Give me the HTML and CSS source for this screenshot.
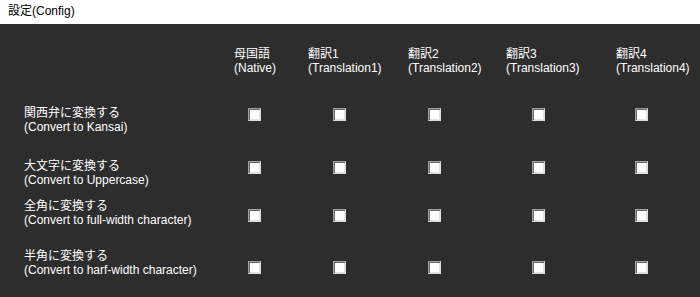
FILE: index.html
```html
<!DOCTYPE html>
<html lang="ja">
<head>
    <meta charset="UTF-8">
    <meta name="viewport" content="width=device-width, initial-scale=1.0">
    <title>設定(Config)</title>
    <link rel="stylesheet" href="styles.css">
</head>
<body>
    <div class="titlebar">設定(Config)</div>
    <div class="panel">
        <div class="row head">
            <div class="label"></div>
            <div class="col">母国語<br>(Native)</div>
            <div class="col">翻訳1<br>(Translation1)</div>
            <div class="col">翻訳2<br>(Translation2)</div>
            <div class="col">翻訳3<br>(Translation3)</div>
            <div class="col">翻訳4<br>(Translation4)</div>
        </div>
        <div class="row r1">
            <div class="label">関西弁に変換する<br>(Convert to Kansai)</div>
            <div class="col"><input type="checkbox" class="check"></div>
            <div class="col"><input type="checkbox" class="check"></div>
            <div class="col"><input type="checkbox" class="check"></div>
            <div class="col"><input type="checkbox" class="check"></div>
            <div class="col"><input type="checkbox" class="check"></div>
        </div>
        <div class="row r2">
            <div class="label">大文字に変換する<br>(Convert to Uppercase)</div>
            <div class="col"><input type="checkbox" class="check"></div>
            <div class="col"><input type="checkbox" class="check"></div>
            <div class="col"><input type="checkbox" class="check"></div>
            <div class="col"><input type="checkbox" class="check"></div>
            <div class="col"><input type="checkbox" class="check"></div>
        </div>
        <div class="row r3">
            <div class="label">全角に変換する<br>(Convert to full-width character)</div>
            <div class="col"><input type="checkbox" class="check"></div>
            <div class="col"><input type="checkbox" class="check"></div>
            <div class="col"><input type="checkbox" class="check"></div>
            <div class="col"><input type="checkbox" class="check"></div>
            <div class="col"><input type="checkbox" class="check"></div>
        </div>
        <div class="row r4">
            <div class="label">半角に変換する<br>(Convert to harf-width character)</div>
            <div class="col"><input type="checkbox" class="check"></div>
            <div class="col"><input type="checkbox" class="check"></div>
            <div class="col"><input type="checkbox" class="check"></div>
            <div class="col"><input type="checkbox" class="check"></div>
            <div class="col"><input type="checkbox" class="check"></div>
        </div>
    </div>
</body>
</html>
```
FILE: styles.css
```css
body {
    margin: 0;
    font-family: "Liberation Sans", "Noto Sans CJK JP", sans-serif;
    font-size: 12px;
    background: #2d2d2d;
}
.titlebar {
    height: 24px;
    line-height: 22px;
    padding-left: 8px;
    background: #ffffff;
    color: #000000;
}
.panel {
    height: 273px;
    background: #2d2d2d;
    color: #ffffff;
    padding-top: 23px;
    box-sizing: border-box;
}
.row {
    display: grid;
    grid-template-columns: 234px 74px 100px 98px 110px 84px;
    line-height: 14px;
}
.label {
    padding-left: 24px;
    white-space: nowrap;
}
.col {
    white-space: nowrap;
}
.head {
    height: 59px;
}
.r1 { height: 53px; }
.r2 { height: 40px; }
.r3 { height: 50px; }
.r4 { height: 40px; }

.check {
    appearance: none;
    -webkit-appearance: none;
    display: block;
    width: 13px;
    height: 13px;
    margin: 2px 0 0 0;
    box-sizing: border-box;
    background: #ffffff;
    border-top: 1px solid #a0a0a0;
    border-left: 1px solid #a0a0a0;
    border-right: 1px solid #dcdcdc;
    border-bottom: 1px solid #dcdcdc;
    box-shadow: inset 1px 1px 0 #696969, inset -1px -1px 0 #e3e3e3;
}
.r3 .check { margin-top: 10px; }
.r4 .check { margin-top: 12px; }

.row .col:nth-child(2) .check { margin-left: 14px; }
.row .col:nth-child(3) .check { margin-left: 25px; }
.row .col:nth-child(4) .check { margin-left: 20px; }
.row .col:nth-child(5) .check { margin-left: 26px; }
.row .col:nth-child(6) .check { margin-left: 19px; }
```
